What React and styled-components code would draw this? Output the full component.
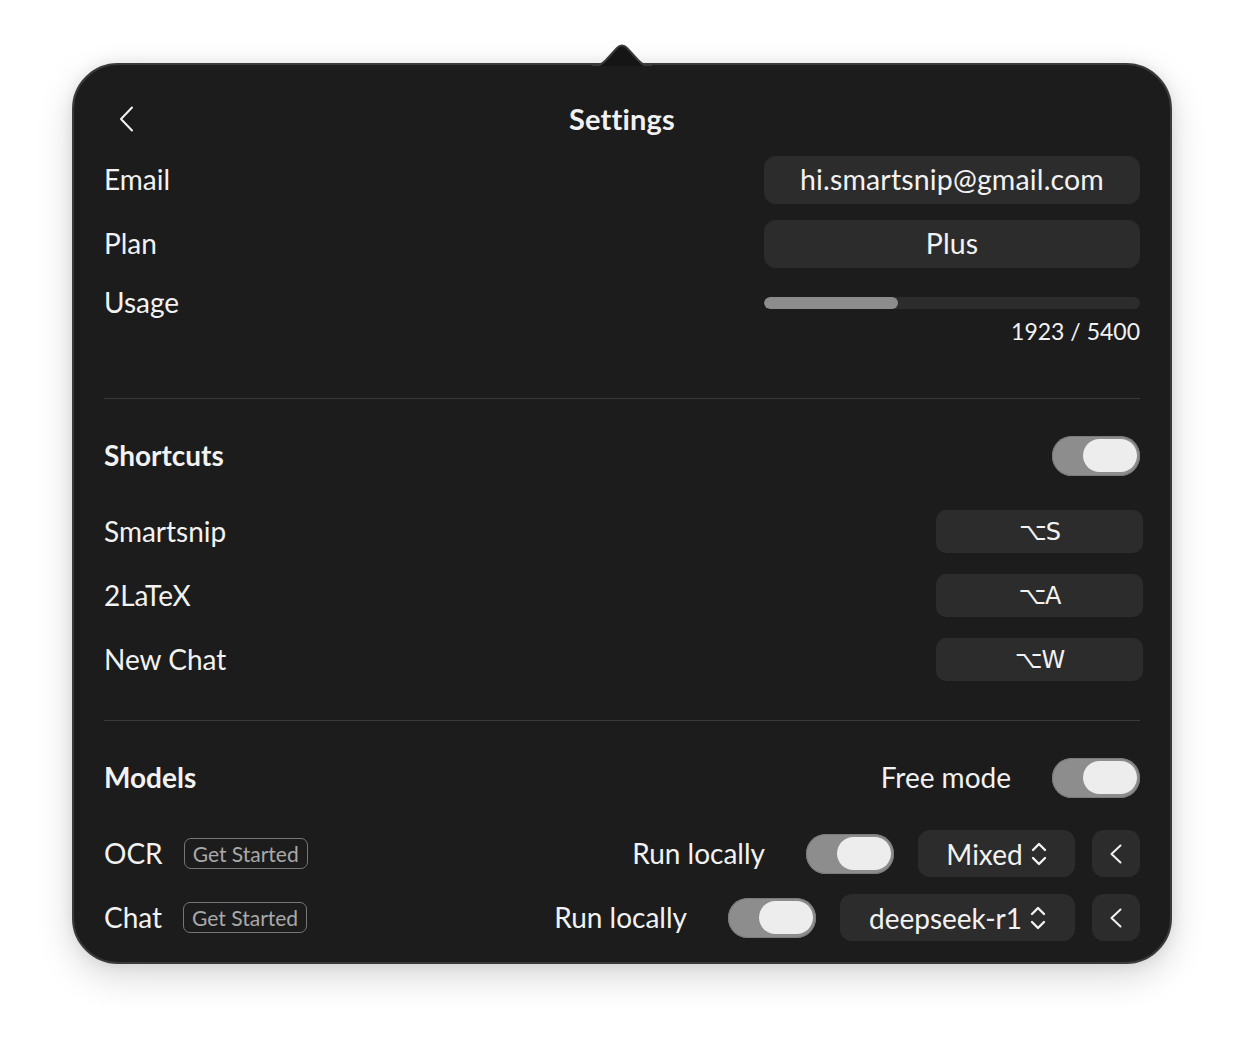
import styled, { createGlobalStyle } from 'styled-components'

const GlobalStyle = createGlobalStyle`
  html, body {
    margin: 0;
    padding: 0;
    background: #ffffff;
  }
  body {
    font-family: Lato, "Open Sans", sans-serif;
    -webkit-font-smoothing: antialiased;
  }
`

const Page = styled.div`
  width: 1244px;
  height: 1044px;
  box-sizing: border-box;
  padding: 63px 72px 0 72px;
`

const Panel = styled.div`
  position: relative;
  width: 1100px;
  height: 901px;
  box-sizing: border-box;
  background: #1c1c1c;
  border: 2px solid #3a3a3a;
  border-radius: 46px;
  box-shadow: 0 12px 36px rgba(0, 0, 0, 0.16), 0 0 14px rgba(0, 0, 0, 0.08);
  padding: 0 30px 0 30px;
  color: #f2f2f2;
`

const Notch = styled.svg`
  position: absolute;
  top: -22px;
  left: 518px;
  width: 60px;
  height: 24px;
`

const Header = styled.header`
  position: relative;
  display: flex;
  align-items: center;
  justify-content: center;
  height: 38px;
  margin-top: 34px;
`

const BackIcon = styled.svg`
  position: absolute;
  left: 15px;
  top: 7px;
`

const Title = styled.h1`
  margin: 0;
  font-size: 29px;
  font-weight: 700;
  letter-spacing: 0.2px;
`

const Row = styled.div`
  display: flex;
  align-items: ${(p) => p.$align || 'center'};
  justify-content: space-between;
  height: ${(p) => p.$h || 48}px;
  margin-top: ${(p) => p.$mt || 0}px;
  margin-right: ${(p) => p.$mr || 0}px;
`

const Label = styled.span`
  font-size: 28px;
  line-height: 36px;
  padding-bottom: 2px;
  font-weight: ${(p) => (p.$bold ? 700 : 400)};
  white-space: nowrap;
`

const ValueBox = styled.div`
  width: 376px;
  height: 48px;
  border-radius: 12px;
  background: #2c2c2c;
  display: flex;
  align-items: center;
  justify-content: center;
  font-size: 28.5px;
  padding-bottom: 2px;
  box-sizing: border-box;
  letter-spacing: 0.15px;
`

const UsageCol = styled.div`
  width: 376px;
  display: flex;
  flex-direction: column;
  align-items: flex-end;
  padding-top: 13px;
`

const Track = styled.div`
  width: 100%;
  height: 12px;
  border-radius: 6px;
  background: #2c2c2c;
  overflow: hidden;
`

const Fill = styled.div`
  height: 100%;
  border-radius: 6px;
  background: #8c8c8c;
`

const Count = styled.span`
  margin-top: 9px;
  font-size: 23px;
  line-height: 26px;
`

const Divider = styled.hr`
  margin: ${(p) => p.$mt}px 0 0 0;
  border: none;
  height: 1px;
  background: #393939;
`

const ToggleTrack = styled.div`
  position: relative;
  flex: none;
  width: 88px;
  height: 40px;
  border-radius: 20px;
  background: #8d8d8d;
  box-shadow: inset 0 0 0 1px #7a7a7a;
`

const Knob = styled.div`
  position: absolute;
  right: 3px;
  top: 3px;
  width: 54px;
  height: 33px;
  border-radius: 17px;
  background: #ededed;
`

const KeyBox = styled.div`
  width: 207px;
  height: 43px;
  border-radius: 10px;
  background: #2c2c2c;
  display: flex;
  align-items: center;
  justify-content: center;
  font-size: 24px;
  font-family: "DejaVu Sans", Lato, sans-serif;
  letter-spacing: -1px;
`

const Group = styled.div`
  display: flex;
  align-items: center;
  gap: ${(p) => p.$gap || 0}px;
`

const Badge = styled.span`
  height: 31px;
  box-sizing: border-box;
  padding: 0 8px 1px 8px;
  border: 1.5px solid #767676;
  border-radius: 7px;
  color: #a9a9a9;
  font-size: 21px;
  display: flex;
  align-items: center;
`

const Select = styled.div`
  width: ${(p) => p.$w}px;
  height: 47px;
  border-radius: 12px;
  background: #2c2c2c;
  display: flex;
  align-items: center;
  justify-content: center;
  gap: 8px;
  font-size: 28px;
  margin-left: 24px;
`

const IconButton = styled.div`
  width: 48px;
  height: 47px;
  border-radius: 12px;
  background: #2c2c2c;
  display: flex;
  align-items: center;
  justify-content: center;
  margin-left: 17px;
`

const SideText = styled.span`
  font-size: 28px;
  margin-right: 41px;
  padding-bottom: 2px;
  white-space: nowrap;
`

function Toggle() {
  return (
    <ToggleTrack>
      <Knob />
    </ToggleTrack>
  )
}

function UpDown() {
  return (
    <svg width="16" height="24" viewBox="0 0 16 24" fill="none">
      <path d="M2 8 L8 2 L14 8" stroke="#f2f2f2" strokeWidth="2.4" strokeLinecap="round" strokeLinejoin="round" />
      <path d="M2 16 L8 22 L14 16" stroke="#f2f2f2" strokeWidth="2.4" strokeLinecap="round" strokeLinejoin="round" />
    </svg>
  )
}

function Chevron({ w = 12, h = 20 }) {
  return (
    <svg width={w} height={h} viewBox={`0 0 ${w} ${h}`} fill="none">
      <path
        d={`M${w - 1.5} 1.5 L1.5 ${h / 2} L${w - 1.5} ${h - 1.5}`}
        stroke="#f2f2f2"
        strokeWidth="2"
        strokeLinecap="round"
        strokeLinejoin="round"
      />
    </svg>
  )
}

function ModelRow({ name, model, selectWidth, mt }) {
  return (
    <Row $h={47} $mt={mt}>
      <Group $gap={21}>
        <Label>{name}</Label>
        <Badge>Get Started</Badge>
      </Group>
      <Group>
        <SideText>Run locally</SideText>
        <Toggle />
        <Select $w={selectWidth}>
          <span>{model}</span>
          <UpDown />
        </Select>
        <IconButton>
          <Chevron w={12} h={20} />
        </IconButton>
      </Group>
    </Row>
  )
}

const shortcuts = [
  { name: 'Smartsnip', key: '⌥S' },
  { name: '2LaTeX', key: '⌥A' },
  { name: 'New Chat', key: '⌥W' },
]

export default function App() {
  const used = 1923
  const limit = 5400

  return (
    <>
      <GlobalStyle />
      <Page>
        <Panel>
          <Notch viewBox="0 0 60 24">
            <path
              d="M0 23 C8 23 10 21 14 17 L25 5 C28 1.5 32 1.5 35 5 L46 17 C50 21 52 23 60 23"
              fill="#151515"
              stroke="#3a3a3a"
              strokeWidth="2"
            />
            <rect x="0" y="23" width="60" height="1" fill="#1c1c1c" />
          </Notch>

          <Header>
            <BackIcon width="15" height="26" viewBox="0 0 15 26" fill="none">
              <path d="M13 1.5 L2 13 L13 24.5" stroke="#f2f2f2" strokeWidth="2" strokeLinecap="round" strokeLinejoin="round" />
            </BackIcon>
            <Title>Settings</Title>
          </Header>

          <Row $mt={19}>
            <Label>Email</Label>
            <ValueBox>hi.smartsnip@gmail.com</ValueBox>
          </Row>
          <Row $mt={16}>
            <Label>Plan</Label>
            <ValueBox>Plus</ValueBox>
          </Row>
          <Row $mt={16} $h={61} $align="flex-start">
            <Label>Usage</Label>
            <UsageCol>
              <Track>
                <Fill style={{ width: `${(used / limit) * 100}%` }} />
              </Track>
              <Count>
                {used} / {limit}
              </Count>
            </UsageCol>
          </Row>

          <Divider $mt={53} />

          <Row $mt={37} $h={40}>
            <Label $bold>Shortcuts</Label>
            <Toggle />
          </Row>
          {shortcuts.map((s, i) => (
            <Row key={s.name} $mt={i === 0 ? 34 : 21} $h={43} $mr={-3}>
              <Label>{s.name}</Label>
              <KeyBox>{s.key}</KeyBox>
            </Row>
          ))}

          <Divider $mt={39} />

          <Row $mt={37} $h={40}>
            <Label $bold>Models</Label>
            <Group>
              <SideText>Free mode</SideText>
              <Toggle />
            </Group>
          </Row>
          <ModelRow name="OCR" model="Mixed" selectWidth={157} mt={32} />
          <ModelRow name="Chat" model="deepseek-r1" selectWidth={235} mt={17} />
        </Panel>
      </Page>
    </>
  )
}
